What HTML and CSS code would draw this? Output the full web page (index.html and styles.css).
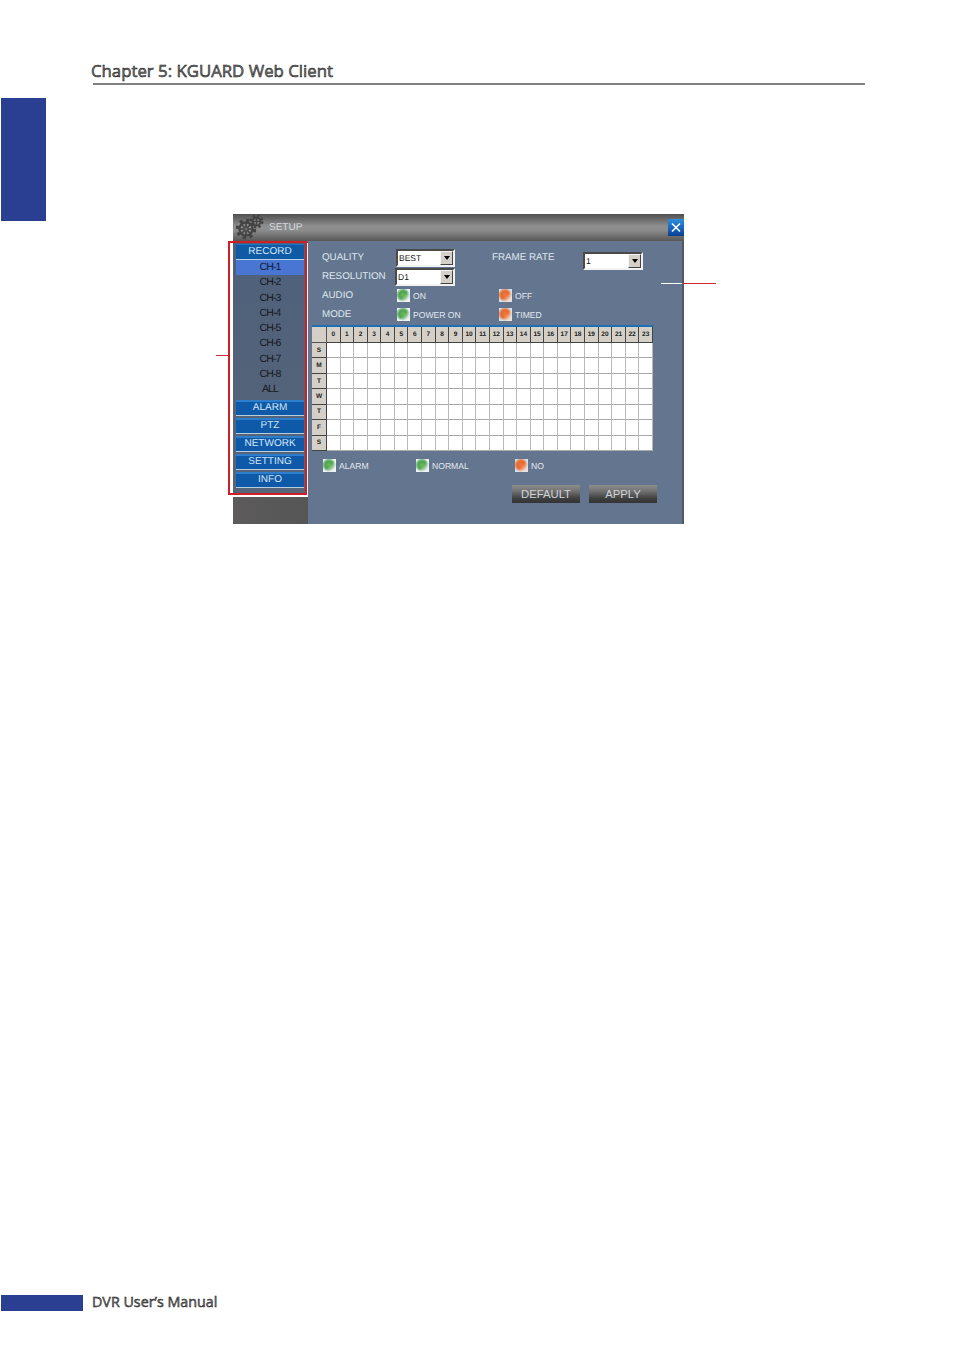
FILE: index.html
```html
<!DOCTYPE html>
<html lang="en">
<head>
<meta charset="utf-8">
<title>Chapter 5: KGUARD Web Client</title>
<link rel="stylesheet" href="styles.css">
</head>
<body>
<div class="page">
  <header class="head">
    <h1 class="head-title">Chapter 5: KGUARD Web Client</h1>
  </header>
  <div class="content">
    <div class="tab"></div>
    <div class="window">
      <div class="titlebar">
        <svg class="gear" viewBox="0 0 30 26" width="30" height="26">
          <g fill="none" stroke="#434343">
            <circle cx="11" cy="15" r="6.6" stroke-width="2.2"/>
            <circle cx="11" cy="15" r="8.8" stroke-width="3" stroke-dasharray="3.2 3.7"/>
            <path d="M11 9v12M5 15h12M6.8 10.8l8.4 8.4M15.2 10.8l-8.4 8.4" stroke-width="1.6"/>
            <circle cx="11" cy="15" r="2.2" fill="#6a6a6a" stroke-width="1"/>
            <circle cx="21.5" cy="7.5" r="4" stroke-width="1.8"/>
            <circle cx="21.5" cy="7.5" r="5.8" stroke-width="2.4" stroke-dasharray="2.4 2.15"/>
            <path d="M21.5 4v7M18 7.5h7" stroke-width="1.2"/>
          </g>
        </svg>
        <span class="title-text">SETUP</span>
        <button class="close" aria-label="Close">
          <svg viewBox="0 0 16 17" width="16" height="17"><path d="M4 4.5l8 8M12 4.5l-8 8" stroke="#fff" stroke-width="1.6" fill="none"/></svg>
        </button>
      </div>
      <div class="panes">
        <nav class="side">
          <div class="side-menu">
            <div class="side-head">RECORD</div>
            <div class="ch ch-active">CH-1</div>
            <div class="ch">CH-2</div>
            <div class="ch">CH-3</div>
            <div class="ch">CH-4</div>
            <div class="ch">CH-5</div>
            <div class="ch">CH-6</div>
            <div class="ch">CH-7</div>
            <div class="ch">CH-8</div>
            <div class="ch">ALL</div>
            <div class="side-btn side-btn-first">ALARM</div>
            <div class="side-btn">PTZ</div>
            <div class="side-btn">NETWORK</div>
            <div class="side-btn">SETTING</div>
            <div class="side-btn">INFO</div>
          </div>
          <div class="side-foot"></div>
        </nav>
        <main class="main">
          <div class="form">
            <span class="lbl">QUALITY</span>
            <div class="select select-a"><span>BEST</span><i class="arrow"></i></div>
            <span class="lbl">FRAME RATE</span>
            <div class="select select-c"><span>1</span><i class="arrow"></i></div>

            <span class="lbl">RESOLUTION</span>
            <div class="select select-b"><span>D1</span><i class="arrow"></i></div>
            <span></span><span></span>

            <span class="lbl">AUDIO</span>
            <label class="opt opt-left"><i class="led green"></i>ON</label>
            <label class="opt opt-right"><i class="led orange"></i>OFF</label>
            <span></span>

            <span class="lbl">MODE</span>
            <label class="opt opt-left"><i class="led green"></i>POWER ON</label>
            <label class="opt opt-right"><i class="led orange"></i>TIMED</label>
            <span></span>
          </div>

          <div class="sched">
            <div class="corner"></div>
            <div class="hours">
              <span>0</span><span>1</span><span>2</span><span>3</span><span>4</span><span>5</span><span>6</span><span>7</span><span>8</span><span>9</span><span>10</span><span>11</span><span>12</span><span>13</span><span>14</span><span>15</span><span>16</span><span>17</span><span>18</span><span>19</span><span>20</span><span>21</span><span>22</span><span>23</span>
            </div>
            <div class="days">
              <span>S</span><span>M</span><span>T</span><span>W</span><span>T</span><span>F</span><span>S</span>
            </div>
            <div class="cells"></div>
          </div>

          <div class="legend">
            <label class="opt leg-a"><i class="led green"></i>ALARM</label>
            <label class="opt leg-b"><i class="led green"></i>NORMAL</label>
            <label class="opt"><i class="led orange"></i>NO</label>
          </div>

          <div class="actions">
            <button class="act">DEFAULT</button>
            <button class="act">APPLY</button>
          </div>
        </main>
      </div>
      <div class="redbox"></div>
      <div class="lead lead-left"></div>
      <div class="lead lead-right"></div>
    </div>
  </div>
  <footer class="foot">
    <div class="foot-bar"></div>
    <span class="foot-text">DVR User’s Manual</span>
  </footer>
</div>
</body>
</html>
```
FILE: styles.css
```css
* { box-sizing: border-box; }
html, body { margin: 0; padding: 0; background: #fff; }
.page {
  width: 954px; height: 1350px; display: flex; flex-direction: column;
  font-family: "Open Sans", "Liberation Sans", sans-serif; color: #222;
}
.head { margin: 60px 0 0 93px; width: 772px; height: 25px; border-bottom: 2px solid #808080; }
.head-title {
  margin: 0 0 0 -2px; font-size: 16.8px; line-height: 22px; font-weight: 400; color: #777;
  -webkit-text-stroke: .5px #111; white-space: nowrap;
}
.content { display: flex; margin: 13px 0 0 1px; }
.tab { width: 45px; height: 123px; background: #2b3f92; }
.window {
  position: relative; width: 451px; height: 310px; margin: 116px 0 0 187px;
  display: flex; flex-direction: column; text-rendering: geometricPrecision;
  font-family: "Liberation Sans", Arial, sans-serif; font-size: 9.8px; color: #dfe6ee;
}
.titlebar {
  height: 27px; display: flex; align-items: center; flex: none;
  background: linear-gradient(#4f4f4f 0, #8f8f8f 45%, #8c8c8c 60%, #575757 100%);
}
.gear { margin: -2px 0 0 2px; flex: none; }
.title-text { margin: -1px 0 0 4px; font-size: 10px; color: #d6dbe0; }
.close {
  margin: 0 0 0 auto; padding: 0; border: 0; width: 16px; height: 17px; display: block;
  background: linear-gradient(#2d8fdc, #0f55ad 75%, #0a3f8a);
}
.close svg { display: block; }
.panes { flex: 1; display: flex; min-height: 0; }
.side { width: 75px; flex: none; display: flex; flex-direction: column; background: #54657e; font-size: 10px; }
.side-menu {
  height: 256px; padding: 3px 4px 0 3px;
  background: linear-gradient(#4f607b, #566579);
}
.side-head {
  height: 16px; line-height: 13px; text-align: center; color: #d5e6f7; background: #0e5aa5;
  border-top: 1px solid #1e73c3; border-bottom: 1px solid #b7d4ea;
}
.ch { height: 15.3px; line-height: 14px; text-align: center; color: #15191f; font-size: 10.5px; letter-spacing: -.9px; }
.ch-active { background: #4876d2; color: #0f1a38; }
.side-btn {
  height: 16px; line-height: 11px; margin-bottom: 2px; text-align: center; color: #d5e6f7;
  background: #0f5aa8; border-top: 2px solid #2e7fcb; border-bottom: 1px solid #b7cfdf;
}
.side-btn-first { margin-top: 2.3px; }
.side-foot { flex: 1; background: linear-gradient(90deg, #5d5b5b, #565656); }
.main { flex: 1; background: #64768f; border-right: 2px solid #55595f; padding: 7px 0 0 4px; display: flex; flex-direction: column; min-width: 0; }
.form {
  display: grid; grid-template-columns: 74px 96px 91px auto; grid-auto-rows: 19px; align-items: center;
  height: 78px; padding-left: 10px;
}
.lbl { white-space: nowrap; margin-top: -1px; }
.select {
  position: relative; height: 18px; background: #fff; color: #111; width: 60px;
  border: 2px solid; border-color: #4a4a4a #f2f2f2 #f2f2f2 #4a4a4a;
  font-size: 8.5px; line-height: 14px; padding-left: 1px;
}
.select-a { width: 59px; }
.select-b { margin-left: -1px; }
.select-c { margin-top: 6px; }
.arrow {
  position: absolute; right: 0; top: 0; width: 13px; height: 14px; background: #d4d0c8;
  border: 1px solid; border-color: #f5f5f5 #444 #444 #f5f5f5;
}
.arrow::after {
  content: ""; position: absolute; left: 2.5px; top: 4px;
  border: 3.5px solid transparent; border-top: 4px solid #000; border-bottom: 0;
}
.opt { display: flex; align-items: center; font-size: 8.6px; white-space: nowrap; color: #e2e8ef; }
.opt-left { margin-left: 1px; }
.opt-right { margin-left: 7px; }
.led {
  width: 13px; height: 13px; margin-right: 3px; flex: none; display: block; background-color: #f0f3f2;
}
.green {
  background-image:
    linear-gradient(135deg, transparent 50%, rgba(240,243,242,.8) 82%),
    radial-gradient(circle 7px at 46% 46%, #6cb952 0, #4ca451 55%, #8fc39a 80%, #f0f3f2 100%);
}
.orange {
  background-color: #d8e6f0;
  background-image:
    linear-gradient(135deg, transparent 50%, rgba(240,225,215,.8) 82%),
    radial-gradient(circle 7px at 46% 46%, #f07a38 0, #e8672e 55%, #e79a74 80%, #cfe2f0 100%);
}
.sched {
  width: 342px; height: 125px; display: grid;
  grid-template-columns: 15px 326px; grid-template-rows: 16px 108px;
  border-top: 2px solid #1e6fb8; border-bottom: 1px solid #1e6fb8; background: #fff;
  border-right: 1px solid #64768f;
  margin-top: -1px;
}
.corner { background: #d4d0c8; border-right: 1px solid #555; border-bottom: 1px solid #555; }
.hours { display: grid; grid-template-columns: repeat(24, 1fr); }
.hours span, .days span {
  display: flex; align-items: center; justify-content: center;
  background: #d4d0c8; color: #222; font-size: 6.5px; font-weight: 700;
  border-right: 1px solid #444; border-bottom: 1px solid #444;
}
.days { display: grid; grid-template-rows: repeat(7, 1fr); }
.cells {
  background-color: #fff;
  background-image:
    repeating-linear-gradient(90deg, transparent 0, transparent 12.58px, #b9b9b9 12.58px, #b9b9b9 13.58px),
    repeating-linear-gradient(180deg, transparent 0, transparent 14.43px, #a9a9a9 14.43px, #a9a9a9 15.43px);
}
.legend { display: flex; margin: 9px 0 0 11px; height: 13px; }
.leg-a { width: 93px; }
.leg-b { width: 99px; }
.actions { display: flex; gap: 9px; margin: 13px 0 0 200px; }
.act {
  width: 68px; height: 18px; padding: 0; border: 0; font: inherit; font-size: 11.3px; color: #cfd3d6;
  background: linear-gradient(#8e8e8e 0, #707070 35%, #3f3f3f 75%, #333 100%);
}
.redbox {
  position: absolute; left: -5px; top: 27px; width: 79px; height: 254px;
  border: 2px solid #cf1f25; box-shadow: 1px 2px 0 #fff;
}
.lead { position: absolute; height: 1px; }
.lead-left { left: -17px; top: 141px; width: 12px; background: #cf2a35; }
.lead-right { left: 428px; top: 69px; width: 55px; background: linear-gradient(90deg, #fff 0, #fff 39%, #cf2a35 39%); }
.foot { display: flex; align-items: flex-start; margin: auto 0 39px 1px; height: 16px; }
.foot-bar { width: 82px; height: 16px; background: #2b3f92; }
.foot-text {
  margin-left: 9px; font-size: 14.3px; line-height: 14px; color: #777; -webkit-text-stroke: .45px #111; white-space: nowrap;
}
```
